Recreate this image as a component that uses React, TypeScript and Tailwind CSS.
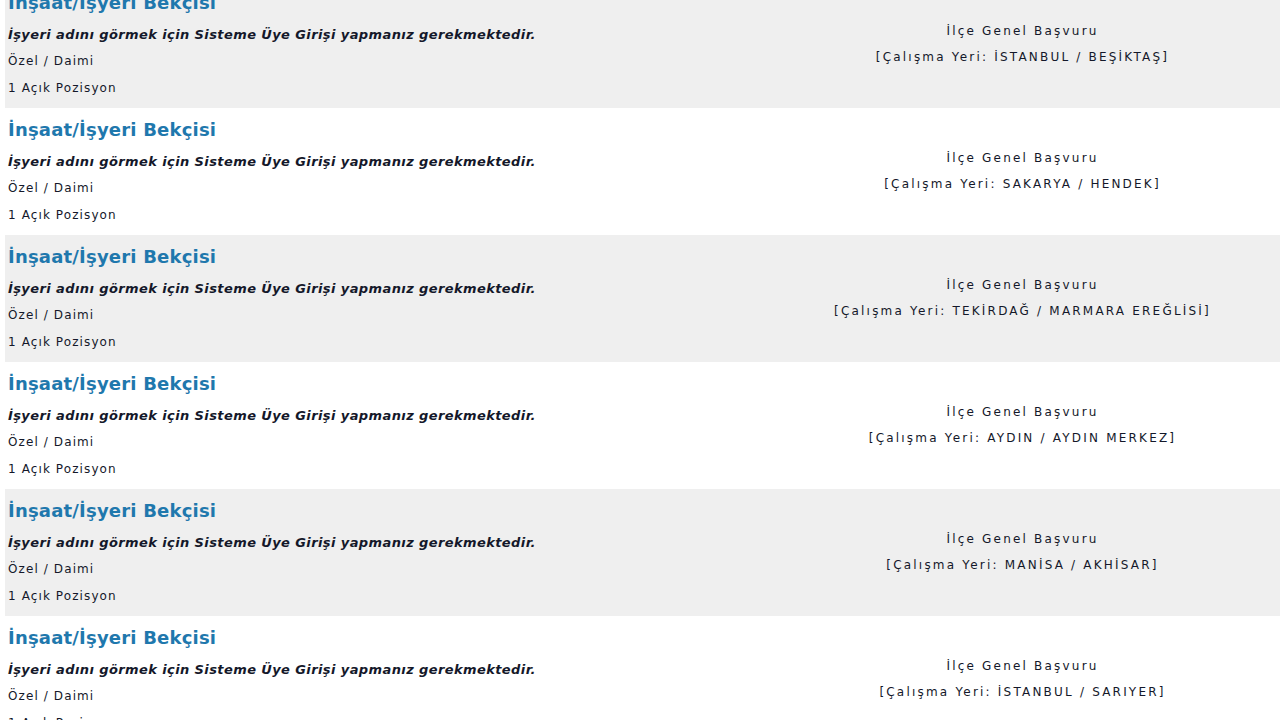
import React from "react";

const rows = [
  "İSTANBUL / BEŞİKTAŞ",
  "SAKARYA / HENDEK",
  "TEKİRDAĞ / MARMARA EREĞLİSİ",
  "AYDIN / AYDIN MERKEZ",
  "MANİSA / AKHİSAR",
  "İSTANBUL / SARIYER",
];

export default function App() {
  return (
    <div
      className="w-[1280px] h-[720px] overflow-hidden bg-white"
      style={{ fontFamily: '"DejaVu Sans", Verdana, sans-serif' }}
    >
      <div className="-mt-[19px] pl-[5px] flex flex-col">
        {rows.map((loc, i) => (
          <div
            key={i}
            className={`h-[127px] flex ${i % 2 === 0 ? "bg-[#efefef]" : "bg-white"}`}
          >
            <div className="w-[760px] pl-[3px] pt-[10px] flex flex-col">
              <div className="h-[24px] leading-[24px] text-[18px] font-bold text-[#1f78ad] tracking-[0.2px]">
                İnşaat/İşyeri Bekçisi
              </div>
              <div className="mt-[7px] h-[26px] leading-[26px] text-[13px] font-bold italic text-[#14182a] tracking-[0.4px]">
                İşyeri adını görmek için Sisteme Üye Girişi yapmanız gerekmektedir.
              </div>
              <div className="h-[26px] leading-[26px] text-[12px] text-[#14182a] tracking-[1.1px]">
                Özel / Daimi
              </div>
              <div className="h-[28px] leading-[29px] text-[12px] text-[#14182a] tracking-[1.1px]">
                1 Açık Pozisyon
              </div>
            </div>
            <div className="flex-1 flex flex-col items-center justify-center pb-[2px] text-[12px] text-[#14182a] tracking-[2.2px]">
              <div className="h-[26px] leading-[26px]">İlçe Genel Başvuru</div>
              <div className="h-[26px] leading-[26px]">[Çalışma Yeri: {loc}]</div>
            </div>
          </div>
        ))}
      </div>
    </div>
  );
}
